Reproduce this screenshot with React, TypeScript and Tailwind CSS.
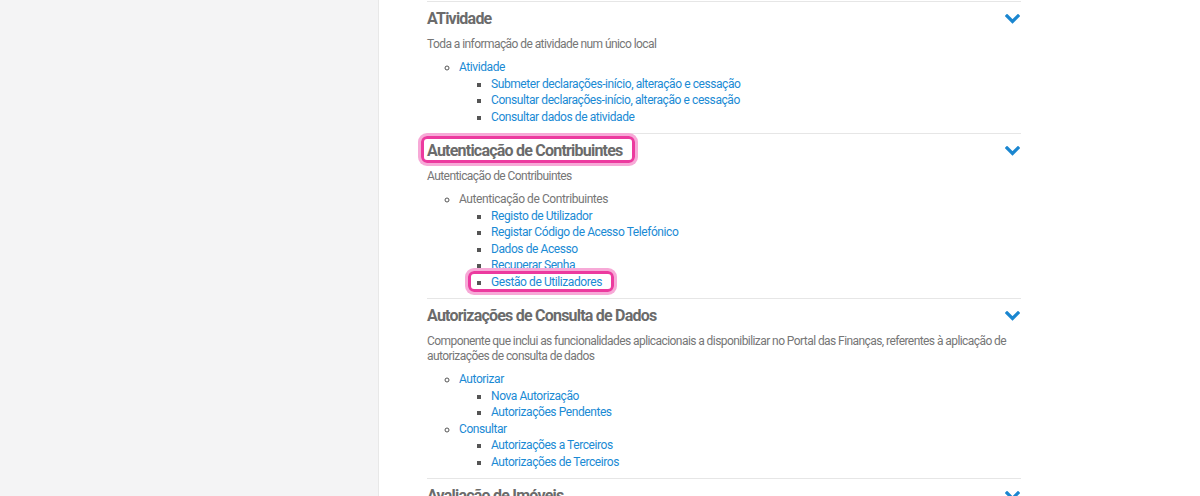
import React from "react";

type Group = {
  label: string;
  link?: boolean;
  items: { label: string; marked?: boolean }[];
};

type Section = {
  title: string;
  description: string;
  marked?: boolean;
  groups: Group[];
};

const sections: Section[] = [
  {
    title: "ATividade",
    description: "Toda a informação de atividade num único local",
    groups: [
      {
        label: "Atividade",
        link: true,
        items: [
          { label: "Submeter declarações-início, alteração e cessação" },
          { label: "Consultar declarações-início, alteração e cessação" },
          { label: "Consultar dados de atividade" },
        ],
      },
    ],
  },
  {
    title: "Autenticação de Contribuintes",
    description: "Autenticação de Contribuintes",
    marked: true,
    groups: [
      {
        label: "Autenticação de Contribuintes",
        items: [
          { label: "Registo de Utilizador" },
          { label: "Registar Código de Acesso Telefónico" },
          { label: "Dados de Acesso" },
          { label: "Recuperar Senha" },
          { label: "Gestão de Utilizadores", marked: true },
        ],
      },
    ],
  },
  {
    title: "Autorizações de Consulta de Dados",
    description:
      "Componente que inclui as funcionalidades aplicacionais a disponibilizar no Portal das Finanças, referentes à aplicação de autorizações de consulta de dados",
    groups: [
      {
        label: "Autorizar",
        link: true,
        items: [{ label: "Nova Autorização" }, { label: "Autorizações Pendentes" }],
      },
      {
        label: "Consultar",
        link: true,
        items: [{ label: "Autorizações a Terceiros" }, { label: "Autorizações de Terceiros" }],
      },
    ],
  },
];

function Chevron() {
  return (
    <svg width="15" height="10" viewBox="0 0 15 10" className="shrink-0">
      <polyline points="2,2 7.5,7.5 13,2" fill="none" stroke="#1a86d0" strokeWidth="3.2" strokeLinecap="square" />
    </svg>
  );
}

// pink annotation frame drawn over the text it highlights
function Mark({ className }: { className: string }) {
  return (
    <span
      className={`pointer-events-none absolute rounded-[6px] border-[3px] border-[#ec3a9f] shadow-[0_0_0_3px_#f7a9d7] ${className}`}
    />
  );
}

function SectionBlock({ section }: { section: Section }) {
  return (
    <section className="border-t border-[#e6e6e6] pt-[7px] pb-[8px]">
      <div className="flex h-[20px] items-center justify-between">
        <h3 className="relative inline-block text-[16px] font-bold leading-[20px] tracking-[-0.78px] text-[#6b6b6b]">
          {section.title}
          {section.marked ? <Mark className="-left-[6px] -right-[12px] -top-[5px] -bottom-[2px]" /> : null}
        </h3>
        <span className="pr-[1px]">
          <Chevron />
        </span>
      </div>
      <p className="mt-[7.5px] text-[12px] leading-[15px] tracking-[-0.57px] text-[#767676]">{section.description}</p>
      <ul className="mt-[7.5px] list-[circle] pl-[32px] text-[12px] leading-[16.5px] tracking-[-0.42px]">
        {section.groups.map((g) => (
          <li key={g.label} className="marker:text-[#555]">
            <span className={g.link ? "text-[#1a8ad4]" : "text-[#767676]"}>{g.label}</span>
            <ul className="list-[square] pl-[32px]">
              {g.items.map((it) => (
                <li key={it.label} className="marker:text-[#333]">
                  <span className="relative inline-block text-[#1a8ad4]">
                    {it.label}
                    {it.marked ? <Mark className="-left-[23px] -right-[12px] -top-[3px] -bottom-[2px]" /> : null}
                  </span>
                </li>
              ))}
            </ul>
          </li>
        ))}
      </ul>
    </section>
  );
}

export default function App() {
  return (
    <div
      className="flex h-[496px] w-[1200px] overflow-hidden bg-white"
      style={{ fontFamily: "Roboto, 'Liberation Sans', sans-serif" }}
    >
      <aside className="w-[379px] shrink-0 border-r border-[#e8e8e8] bg-[#f4f4f5]" />
      <main className="w-[642px] shrink-0 pl-[48px] pt-[1px]">
        {sections.map((s) => (
          <SectionBlock key={s.title} section={s} />
        ))}
        <section className="border-t border-[#e6e6e6] pt-[7px]">
          <div className="flex h-[20px] items-center justify-between">
            <h3 className="text-[16px] font-bold leading-[20px] tracking-[-0.78px] text-[#6b6b6b]">Avaliação de Imóveis</h3>
            <span className="pr-[1px]">
              <Chevron />
            </span>
          </div>
        </section>
      </main>
    </div>
  );
}
